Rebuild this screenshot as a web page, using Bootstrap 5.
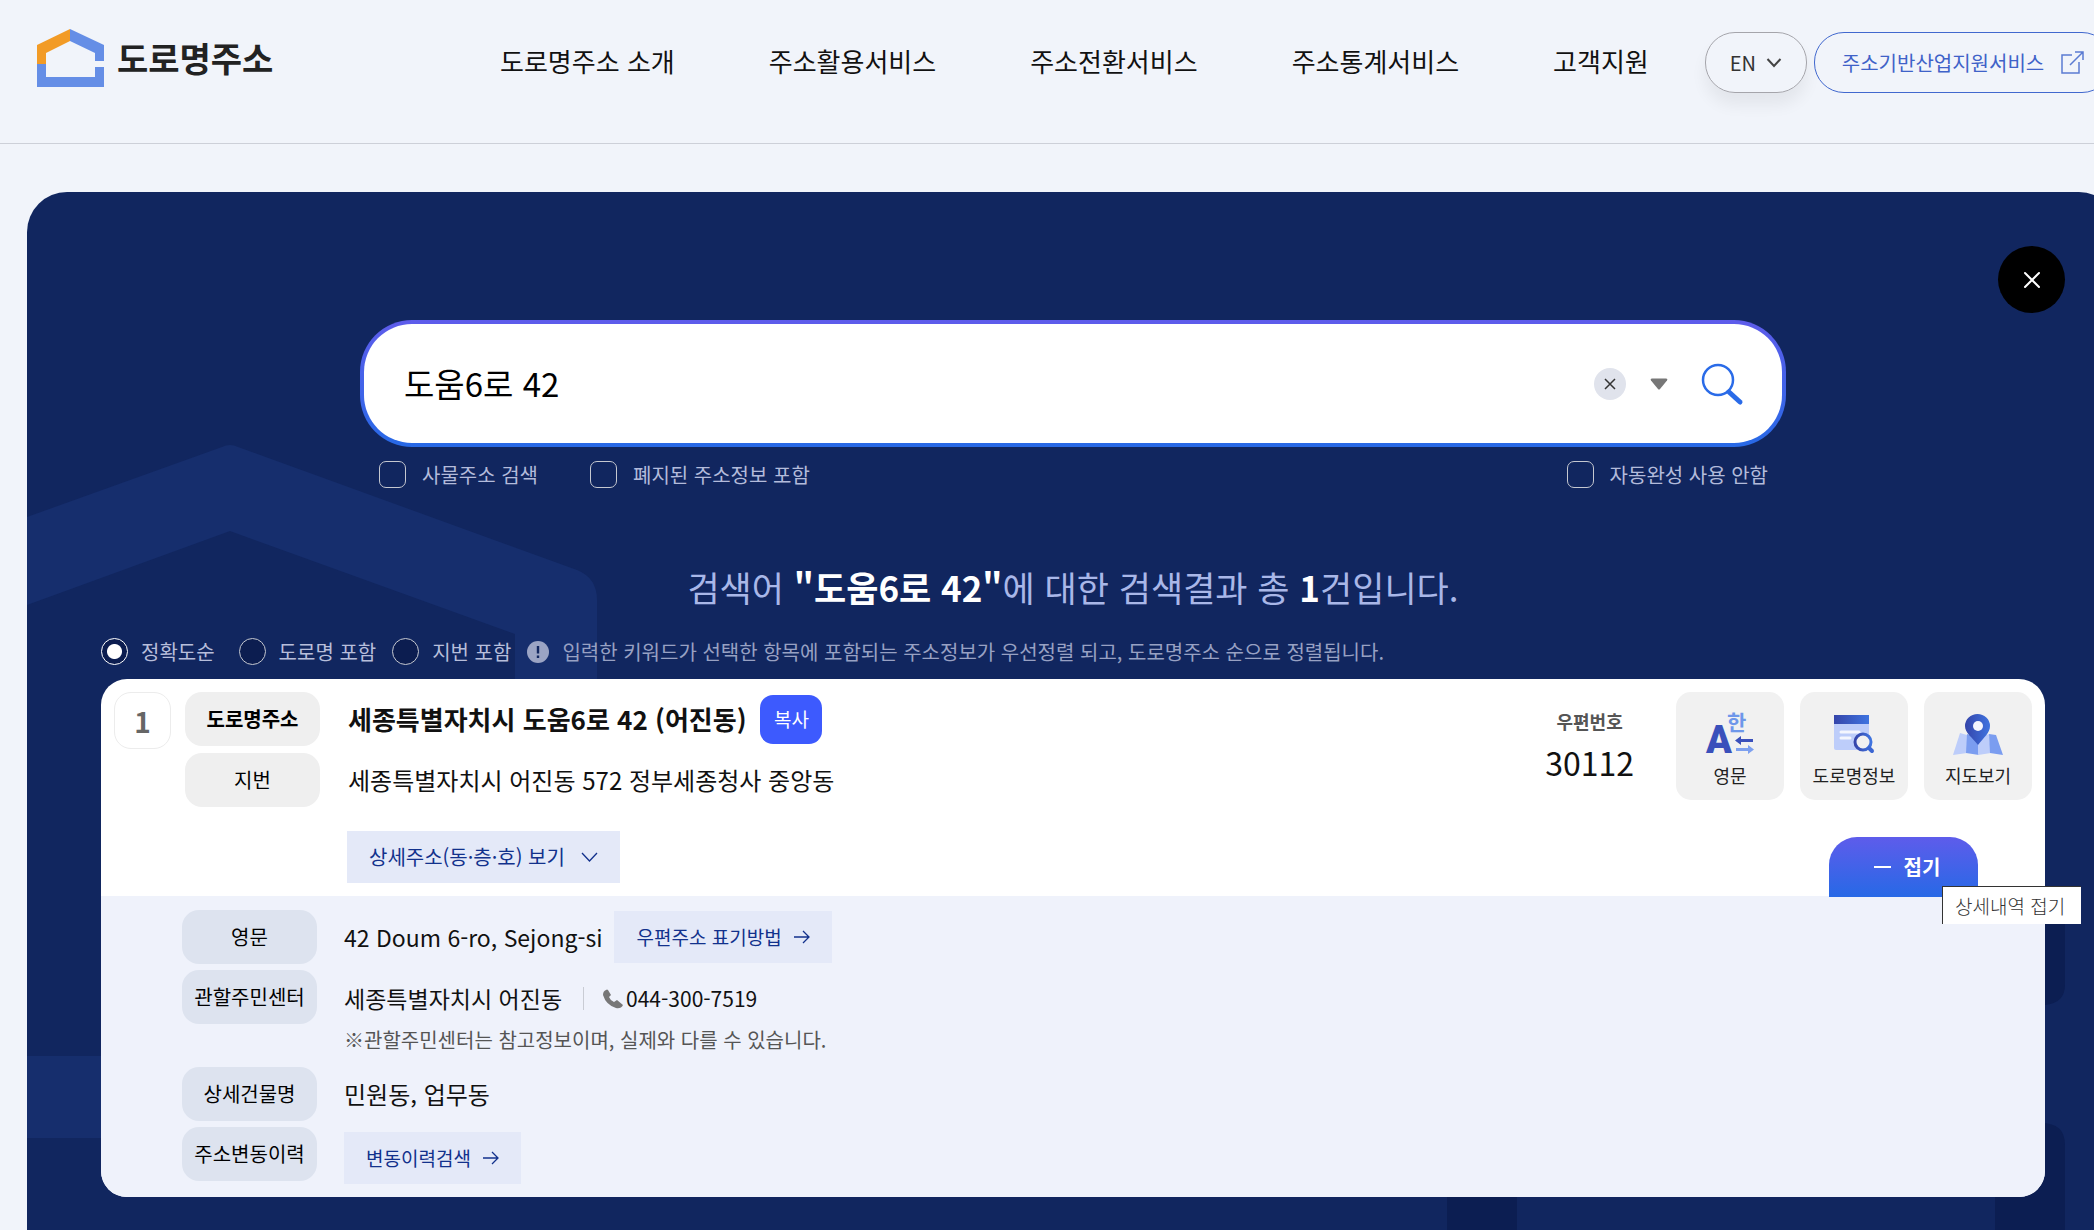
<!DOCTYPE html>
<html lang="ko">
<head>
<meta charset="utf-8">
<meta name="viewport" content="width=device-width, initial-scale=1">
<title>도로명주소</title>
<link href="https://cdn.jsdelivr.net/npm/bootstrap@5.3.0/dist/css/bootstrap.min.css" rel="stylesheet">
<style>
  body { font-family: "Noto Sans CJK KR", "Noto Sans", sans-serif; font-size: 20px; color: #111; background: #f1f4fa; overflow-x: hidden; }
  a { text-decoration: none; color: inherit; }
  button { padding: 0; border: 0; background: none; color: inherit; }
  .shell { margin-right: -52px; min-height: 100vh; }
  .top-bar { padding: 29px 37px 50px; border-bottom: 1px solid #cdd0d8; }
  .brand { gap: 13px; width: 463px; height: 58px; }
  .brand-name { font-size: 34px; line-height: 48px; font-weight: 700; color: #222; }
  .main-nav { gap: 94px; font-size: 26px; line-height: 64px; margin-right: 56px; }
  .pill-btn { height: 61px; margin-top: 3px; border: 1px solid #a5a5ab; border-radius: 30px; }
  .lang-btn { width: 102px; gap: 10px; color: #333; box-shadow: 0 12px 16px rgba(0, 0, 0, .06); }
  .biz-btn { padding: 0 27px; gap: 17px; margin-left: 7px; border-color: #4168ce; color: #3f62c8; }
  .panel { margin: 48px 27px 0; padding: 128px 74px 33px; background: #11265f; border-radius: 40px 40px 0 0; }
  .panel-art { position: absolute; left: 0; top: 0; width: 100%; height: 100%; }
  .close-btn { position: absolute; right: 54px; top: 54px; width: 67px; height: 67px; border-radius: 50%; background: #000; }
  .search-zone { width: 1426px; max-width: 100%; }
  .search-box { height: 127px; padding: 0 38px 0 38px; border: 4px solid transparent; border-radius: 52px;
    background: linear-gradient(#fff, #fff) padding-box, linear-gradient(#5e5ceb, #2769e6) border-box; }
  .search-input { font-size: 33px; border: 0; outline: 0; background: none; color: #000; }
  .clear-btn { width: 32px; height: 32px; border-radius: 50%; background: #e0e3ec; }
  .option-row { padding: 14px 18px 0 19px; color: #b3bbdb; }
  .option-row label, .sort-row label, .sort-row p { line-height: 27px; }
  .option-gap { width: 52px; }
  .tick, .dial { width: 27px; height: 27px; margin: 0; appearance: none; border: 1px solid #c5c8d0; }
  .tick { border-radius: 7px; background: none; }
  .dial { border-radius: 50%; background: #0c1d50; }
  .dial:checked { border-color: #fff; background: radial-gradient(circle, #fff 7px, #0c1d50 8px); }
  .result-title { margin: 72px 0 24px; font-size: 35px; line-height: 54px; font-weight: 400; color: #a9b7e8; }
  .result-title strong { color: #fff; }
  .sort-row { color: #b7bedb; }
  .sort-row p { color: #98a1c3; }
  .sort-row label, .sort-row p { margin-left: 13px; }
  .result { margin-top: 14px; border-radius: 26px; background: #fff; }
  .result-main { padding-left: 13px; }
  .left-part { padding: 13px 0; gap: 14px; }
  .right-part { padding: 13px 13px 0 0; }
  .order-no { width: 57px; height: 57px; border: 1px solid #ececec; border-radius: 17px; font-size: 28px; font-weight: 700; color: #666; }
  .tag { width: 135px; height: 54px; border-radius: 17px; background: #efefef; color: #000; }
  .line { gap: 28px; }
  .lot-line { margin-top: 7px; }
  .addr { font-size: 24px; line-height: 54px; }
  .addr-bold { font-size: 26px; line-height: 54px; font-weight: 700; }
  .copy-btn { width: 62px; height: 49px; margin-left: 14px; border-radius: 13px; background: #3d5afe; color: #fff; font-size: 19px; }
  .soft-btn { height: 52px; padding: 0 22px; background: #e4e9f8; color: #12318c; font-size: 19px; }
  .more-btn { margin: 24px 0 0 162px; font-size: 20px; }
  .zip { margin-right: 26px; }
  .zip-label { font-size: 18px; line-height: 26px; font-weight: 700; color: #555; }
  .zip-code { font-size: 32px; line-height: 48px; margin-top: 4px; }
  .tool-btn { width: 108px; height: 108px; padding-top: 6px; border-radius: 15px; background: #f1f1f1; font-size: 18px; line-height: 26px; color: #222; }
  .tool-btn svg { overflow: visible; }
  .fold { width: 149px; height: 60px; margin: 0 54px -1px 0; z-index: 2; }
  .fold-btn { gap: 13px; padding-left: 7px; border-radius: 28px 28px 0 0; background: linear-gradient(#5e5ceb, #2769e6); color: #fff; font-weight: 700; }
  .hint { position: absolute; left: 113px; top: 49px; padding: 0 16px 0 12px; border: solid #333; border-width: 1px 0 0 1px; background: #fff; font-size: 19px; line-height: 37px; font-weight: 300; color: #333; }
  .result-more { padding: 14px 13px 13px 81px; gap: 6px; border-radius: 0 0 26px 26px; background: #eff2fb; }
  .result-more .tag { background: #dde3ef; }
  .result-more .line { gap: 27px; }
  .eng-addr, .center-row { font-size: 23px; }
  .center-row { line-height: 57px; }
  .eng-addr { margin-right: 12px; }
  .history-btn { margin-top: 5px; }
  .tel { gap: 3px; margin-left: 19px; font-size: 21px; }
  .bar { width: 1px; height: 23px; margin-left: 21px; background: #c9ccd4; }
  .note { padding-bottom: 8px; line-height: 26px; color: #555; }
</style>
<script src="https://cdn.jsdelivr.net/npm/bootstrap@5.3.0/dist/js/bootstrap.bundle.min.js"></script>
</head>
<body>
<div class="shell d-flex flex-column">
  <header class="top-bar d-flex align-items-start">
    <a href="#" class="brand d-flex align-items-center flex-shrink-0">
      <svg width="67" height="58" viewBox="0 0 67 58" aria-hidden="true">
        <path d="M0 36V16L33 0V12L9 24V36Z" fill="#f29b26"/>
        <path d="M33 0L67 16V32H58V24L33 12Z" fill="#658ee6"/>
        <path d="M0 35H9V48H58V38H67V58H0Z" fill="#658ee6"/>
      </svg>
      <span class="brand-name">도로명주소</span>
    </a>
    <nav class="main-nav d-flex text-nowrap flex-shrink-0" aria-label="주 메뉴">
      <a href="#">도로명주소 소개</a>
      <a href="#">주소활용서비스</a>
      <a href="#">주소전환서비스</a>
      <a href="#">주소통계서비스</a>
      <a href="#">고객지원</a>
    </nav>
    <button type="button" class="pill-btn lang-btn d-flex align-items-center justify-content-center flex-shrink-0">EN
      <svg width="16" height="12" viewBox="0 0 16 12" fill="none" stroke="#444" stroke-width="2" aria-hidden="true"><path d="M1.500 2L8 9L14.500 2"/></svg>
    </button>
    <a href="#" class="pill-btn biz-btn d-flex align-items-center flex-shrink-0 text-nowrap">주소기반산업지원서비스
      <svg width="23" height="23" viewBox="0 0 23 23" fill="none" stroke="#5b7bd2" stroke-width="1.500" aria-hidden="true"><path d="M11 4H1V22H18V11M14 1H22V9M22 1L9 14"/></svg>
    </a>
  </header>

  <main class="panel position-relative flex-grow-1">
    <svg class="panel-art" aria-hidden="true">
      <path d="M0 325L195 255Q203 251 211 255L550 378Q570 386 570 408V500H488V442L203 339L0 413ZM0 864H90V946H0Z" fill="#162e6d"/>
      <path d="M1960 710H2038V793Q2038 811 2018 813H1960ZM1420 1100V950Q1420 931 1440 931H2014Q2038 931 2038 953V1100H1968V1000H1490V1100Z" fill="#0c1e52"/>
    </svg>
    <button type="button" class="close-btn d-flex align-items-center justify-content-center" aria-label="닫기">
      <svg width="18" height="18" viewBox="0 0 18 18" stroke="#fff" stroke-width="2" stroke-linecap="round"><path d="M2 2L16 16M16 2L2 16"/></svg>
    </button>

    <form class="search-zone position-relative mx-auto">
      <div class="search-box d-flex align-items-center">
        <input class="search-input flex-grow-1" type="text" value="도움6로 42" aria-label="주소 검색어">
        <button type="button" class="clear-btn d-flex align-items-center justify-content-center" aria-label="지우기">
          <svg width="12" height="12" viewBox="0 0 12 12" stroke="#333" stroke-width="1.500"><path d="M1 1L11 11M11 1L1 11"/></svg>
        </button>
        <button type="button" class="d-flex ms-4" aria-label="최근 검색어">
          <svg width="18" height="12" viewBox="0 0 18 12"><path d="M2 0.500H16Q18 .5 17 2.500L10 11Q9 12 8 11L1 2.500Q0 .5 2 .5Z" fill="#777"/></svg>
        </button>
        <button type="submit" class="d-flex ms-4 ps-2" aria-label="검색">
          <svg width="44" height="44" viewBox="0 0 44 44" fill="none" stroke="#2a6be8"><circle cx="18" cy="18" r="15" stroke-width="2.500"/><path d="M29 30L40 40" stroke-width="5" stroke-linecap="round"/></svg>
        </button>
      </div>
      <div class="option-row d-flex">
        <input class="tick" type="checkbox" id="optThing"><label class="ms-3" for="optThing">사물주소 검색</label>
        <span class="option-gap"></span>
        <input class="tick" type="checkbox" id="optOld"><label class="ms-3" for="optOld">폐지된 주소정보 포함</label>
        <input class="tick ms-auto" type="checkbox" id="optAuto"><label class="ms-3" for="optAuto">자동완성 사용 안함</label>
      </div>
    </form>

    <h1 class="result-title text-center position-relative">검색어 <strong>"도움6로 42"</strong>에 대한 검색결과 총 <strong>1</strong>건입니다.</h1>

    <div class="sort-row d-flex position-relative text-nowrap">
      <input class="dial" type="radio" name="sort" id="sortExact" checked><label class="me-4" for="sortExact">정확도순</label>
      <input class="dial" type="radio" name="sort" id="sortRoad"><label class="me-3" for="sortRoad">도로명 포함</label>
      <input class="dial" type="radio" name="sort" id="sortLot"><label class="me-3" for="sortLot">지번 포함</label>
      <svg class="align-self-center" width="22" height="22" viewBox="0 0 22 22" aria-hidden="true"><circle cx="11" cy="11" r="11" fill="#9ba4c4"/><path d="M11 5V12.500M11 14.500V17" stroke="#11265f" stroke-width="2.400"/></svg>
      <p class="mb-0">입력한 키워드가 선택한 항목에 포함되는 주소정보가 우선정렬 되고, 도로명주소 순으로 정렬됩니다.</p>
    </div>

    <article class="result position-relative">
      <div class="result-main d-flex justify-content-between">
        <div class="left-part d-flex align-items-start">
          <div class="order-no d-flex align-items-center justify-content-center">1</div>
          <div>
            <div class="line d-flex align-items-center">
              <span class="tag d-flex align-items-center justify-content-center fw-bold">도로명주소</span>
              <div class="d-flex align-items-center">
                <span class="addr-bold">세종특별자치시 도움6로 42 (어진동)</span>
                <button type="button" class="copy-btn">복사</button>
              </div>
            </div>
            <div class="line lot-line d-flex align-items-center">
              <span class="tag d-flex align-items-center justify-content-center">지번</span>
              <span class="addr">세종특별자치시 어진동 572 정부세종청사 중앙동</span>
            </div>
            <button type="button" class="soft-btn more-btn d-flex align-items-center">상세주소(동·층·호) 보기
              <svg class="ms-3" width="17" height="11" viewBox="0 0 17 11" fill="none" stroke="#12318c" stroke-width="1.300" aria-hidden="true"><path d="M1 1L8.500 9L16 1"/></svg>
            </button>
          </div>
        </div>

        <div class="right-part d-flex flex-column justify-content-between align-items-end">
          <div class="d-flex gap-3">
            <div class="zip text-center pt-3">
              <div class="zip-label">우편번호</div>
              <div class="zip-code">30112</div>
            </div>
            <button type="button" class="tool-btn d-flex flex-column align-items-center justify-content-center">
              <svg width="48" height="52" viewBox="0 5 48 52" aria-hidden="true">
                <text x="0" y="48" font-family="Roboto, sans-serif" font-weight="900" font-size="38" fill="#3a50bb">A</text>
                <text x="21" y="25" font-weight="700" font-size="21" fill="#6e97ea">한</text>
                <path d="M29 35.500L35 31V34H47V37H35V40Z" fill="#3a50bb"/><path d="M48 44.500L42 40V43H30V46H42V49Z" fill="#7da0ef"/>
              </svg>영문
            </button>
            <button type="button" class="tool-btn d-flex flex-column align-items-center justify-content-center">
              <svg width="48" height="52" viewBox="0 5 48 52" aria-hidden="true">
                <defs><linearGradient id="blueFade"><stop stop-color="#3545aa"/><stop offset="1" stop-color="#3f74e0"/></linearGradient></defs>
                <path d="M4 18H39V45H6Q4 45 4 43Z" fill="#bdcdfa"/><path d="M4 10H39V19H4Z" fill="url(#blueFade)"/>
                <path d="M11 27H29M11 33H20" stroke="#f4f6fe" stroke-width="3" stroke-linecap="round"/>
                <circle cx="33" cy="37" r="8" fill="#f1f1f1" stroke="url(#blueFade)" stroke-width="3"/><path d="M39 43L42 46" stroke="#3b66d2" stroke-width="4" stroke-linecap="round"/>
              </svg>도로명정보
            </button>
            <button type="button" class="tool-btn d-flex flex-column align-items-center justify-content-center">
              <svg width="50" height="52" viewBox="0 5 50 52" aria-hidden="true">
                <path d="M7 28L14 30V48L0 50Z" fill="#bdcdfa"/><path d="M14 29L26 33V50L13 48Z" fill="#7b9df0"/><path d="M25 33L36 29L38 48L25 50Z" fill="#bdcdfa"/><path d="M36 29L43 30L50 50L37 48Z" fill="#7b9df0"/>
                <path d="M25 40C19 32 12 28 12 21A12.500 12 0 0 1 37 21C37 28 31 32 25 40Z" fill="url(#blueFade)"/><circle cx="25" cy="21" r="5" fill="#f4f6fe"/>
              </svg>지도보기
            </button>
          </div>
          <div class="fold position-relative">
            <button type="button" class="fold-btn d-flex align-items-center justify-content-center w-100 h-100">
              <svg width="17" height="2" viewBox="0 0 17 2" aria-hidden="true"><path d="M0 0H17V2H0Z" fill="#fff"/></svg>접기
            </button>
            <div class="hint text-nowrap" role="tooltip">상세내역 접기</div>
          </div>
        </div>
      </div>

      <div class="result-more d-flex flex-column">
        <div class="line d-flex align-items-center">
          <span class="tag d-flex align-items-center justify-content-center">영문</span>
          <div class="d-flex align-items-center">
            <span class="eng-addr">42 Doum 6-ro, Sejong-si</span>
            <a href="#" class="soft-btn d-flex align-items-center">우편주소 표기방법
              <svg class="ms-2" width="20" height="16" viewBox="0 0 20 16" fill="none" stroke="#12318c" stroke-width="1.300" aria-hidden="true"><path d="M4 8H19M13 2L19 8L13 14"/></svg>
            </a>
          </div>
        </div>
        <div class="line d-flex align-items-start">
          <span class="tag d-flex align-items-center justify-content-center">관할주민센터</span>
          <div>
            <div class="center-row d-flex align-items-center">
              <span>세종특별자치시 어진동</span>
              <span class="bar"></span>
              <a href="#" class="tel d-flex align-items-center">
                <svg width="20" height="20" viewBox="0 0 20 20" aria-hidden="true"><path d="M3 1Q0 2 0 6Q3 16 13 19Q18 20 20 16L14 11L11 13Q7 11 6 8L8 6L5 1Q4 0 3 1Z" fill="#777"/></svg>044-300-7519
              </a>
            </div>
            <div class="note">※관할주민센터는 참고정보이며, 실제와 다를 수 있습니다.</div>
          </div>
        </div>
        <div class="line d-flex align-items-center">
          <span class="tag d-flex align-items-center justify-content-center">상세건물명</span>
          <span class="addr">민원동, 업무동</span>
        </div>
        <div class="line d-flex align-items-start">
          <span class="tag d-flex align-items-center justify-content-center">주소변동이력</span>
          <a href="#" class="soft-btn history-btn d-flex align-items-center">변동이력검색
            <svg class="ms-2" width="20" height="16" viewBox="0 0 20 16" fill="none" stroke="#12318c" stroke-width="1.300" aria-hidden="true"><path d="M4 8H19M13 2L19 8L13 14"/></svg>
          </a>
        </div>
      </div>
    </article>
  </main>
</div>
</body>
</html>
